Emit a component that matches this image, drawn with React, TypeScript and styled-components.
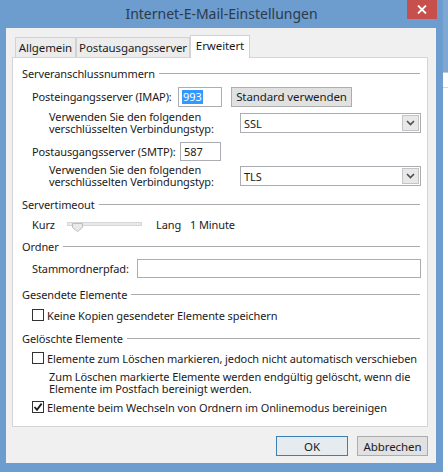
import React from "react";
import styled, { createGlobalStyle } from "styled-components";

const GlobalStyle = createGlobalStyle`
  html, body {
    margin: 0;
    padding: 0;
    background: #ffffff;
  }
  body {
    font-family: "Noto Sans", "Open Sans", sans-serif;
    font-size: 11px;
    letter-spacing: -0.1px;
    color: #1b1b1b;
  }
`;

const Screen = styled.div`
  display: flex;
  width: 448px;
  height: 472px;
  overflow: hidden;
`;

const Frame = styled.div`
  width: 443px;
  flex: none;
  display: flex;
  flex-direction: column;
  background: #6d9cce;
`;

const Backdrop = styled.div`
  flex: 1;
  display: flex;
  flex-direction: column;
  background: #ffffff;
`;

const BackdropHead = styled.div`
  height: 72px;
  background: #7ea7d3;
  border-bottom: 1px solid #c9c9c9;
`;

const BackdropRule = styled.div`
  margin-top: 14px;
  border-top: 1px solid #d6d6d6;
`;

const TitleBar = styled.div`
  height: 28px;
  flex: none;
  display: grid;
  grid-template-columns: 1fr auto 1fr;
  align-items: start;
`;

const Title = styled.div`
  grid-column: 2;
  margin-top: 5px;
  font-size: 14px;
  line-height: 18px;
  letter-spacing: 0;
  color: #2c3a4a;
`;

const CloseButton = styled.div`
  grid-column: 3;
  justify-self: end;
  margin-right: 6px;
  width: 30px;
  height: 19px;
  background: #c7504c;
  display: flex;
  align-items: center;
  justify-content: center;
`;

const Client = styled.div`
  flex: 1;
  margin: 0 7px 9px 6px;
  padding: 0 8px 0 6px;
  background: #f0f0f0;
  display: flex;
  flex-direction: column;
`;

const TabStrip = styled.div`
  display: flex;
  align-items: flex-end;
  height: 22px;
  margin-top: 7px;
  padding-left: 3px;
`;

const Tab = styled.div<{ $active?: boolean; $w: number }>`
  position: relative;
  box-sizing: border-box;
  width: ${(p) => p.$w}px;
  height: ${(p) => (p.$active ? 23 : 20)}px;
  margin-bottom: ${(p) => (p.$active ? -1 : 0)}px;
  padding-bottom: ${(p) => (p.$active ? 3 : 0)}px;
  border: 1px solid #d2d2d2;
  border-bottom: none;
  background: ${(p) => (p.$active ? "#ffffff" : "#ececec")};
  z-index: ${(p) => (p.$active ? 1 : 0)};
  display: flex;
  align-items: center;
  justify-content: center;
  font-size: 11.5px;
`;

const Panel = styled.div`
  box-sizing: border-box;
  height: 370px;
  flex: none;
  background: #ffffff;
  border: 1px solid #d5d5d5;
  padding: 0 6px 0 9px;
  display: flex;
  flex-direction: column;
`;

const Heading = styled.div<{ $top: number }>`
  display: flex;
  align-items: center;
  gap: 4px;
  height: 14px;
  margin-top: ${(p) => p.$top}px;
  padding-right: 1px;
  &::after {
    content: "";
    flex: 1;
    border-top: 1px solid #ababab;
  }
`;

const Row = styled.div<{ $top: number; $h: number; $indent?: number }>`
  display: flex;
  align-items: center;
  height: ${(p) => p.$h}px;
  margin-top: ${(p) => p.$top}px;
  padding-left: ${(p) => p.$indent ?? 10}px;
`;

const Label = styled.div<{ $w?: number; $gap?: number }>`
  flex: none;
  width: ${(p) => (p.$w ? `${p.$w}px` : "auto")};
  margin-left: ${(p) => p.$gap ?? 0}px;
  line-height: 13px;
`;

// one line of a wrapped label, kept to a fixed pitch
const Line = styled.div`
  height: 12px;
  line-height: 12px;
  white-space: nowrap;
`;

const TextBox = styled.div<{ $w?: number; $h: number }>`
  box-sizing: border-box;
  flex: ${(p) => (p.$w ? "none" : "1")};
  width: ${(p) => (p.$w ? `${p.$w}px` : "auto")};
  height: ${(p) => p.$h}px;
  border: 1px solid #abadb3;
  background: #ffffff;
  display: flex;
  align-items: center;
  padding-left: 3px;
`;

const Selected = styled.span`
  background: #3399ff;
  color: #ffffff;
  line-height: 14px;
  padding: 0 1px;
`;

const Button = styled.div<{ $w: number; $default?: boolean; $gap?: number }>`
  box-sizing: border-box;
  flex: none;
  width: ${(p) => p.$w}px;
  height: 20px;
  margin-left: ${(p) => p.$gap ?? 0}px;
  border: 1px solid ${(p) => (p.$default ? "#3c7fb1" : "#adadad")};
  background: ${(p) => (p.$default ? "#e6ebf0" : "#e1e1e1")};
  display: flex;
  align-items: center;
  justify-content: center;
  font-size: 11.5px;
`;

const Select = styled.div`
  box-sizing: border-box;
  flex: none;
  width: 181px;
  height: 20px;
  border: 1px solid #abadb3;
  background: #ffffff;
  display: flex;
  align-items: center;
  justify-content: space-between;
  padding: 0 1px 0 3px;
`;

const DropButton = styled.div`
  box-sizing: border-box;
  width: 17px;
  height: 16px;
  border: 1px solid #c4c4c4;
  background: #e8e8e8;
  display: flex;
  align-items: center;
  justify-content: center;
`;

const Track = styled.div`
  flex: none;
  width: 75px;
  height: 12px;
  display: flex;
  align-items: center;
`;

const TrackBar = styled.div`
  box-sizing: border-box;
  width: 100%;
  height: 4px;
  border: 1px solid #d6d6d6;
  background: #e7eaea;
  display: flex;
  align-items: center;
  padding-left: 4px;
`;

const Thumb = styled.svg`
  flex: none;
  margin-top: 6px;
`;

const CheckRow = styled(Row)`
  gap: 3px;
`;

const CheckBox = styled.div`
  box-sizing: border-box;
  flex: none;
  width: 12px;
  height: 12px;
  border: 1px solid #333333;
  background: #ffffff;
  display: flex;
  align-items: center;
  justify-content: center;
`;

const Note = styled.div<{ $top: number }>`
  margin-top: ${(p) => p.$top}px;
  padding-left: 27px;
`;

const Actions = styled.div`
  display: flex;
  justify-content: flex-end;
  gap: 9px;
  margin-top: 9px;
`;

const Chevron = () => (
  <svg width="9" height="6" viewBox="0 0 9 6">
    <polyline points="1,1 4.5,4.5 8,1" fill="none" stroke="#4d4d4d" strokeWidth="1.6" />
  </svg>
);

const Dropdown = ({ value }: { value: string }) => (
  <Select>
    <span>{value}</span>
    <DropButton>
      <Chevron />
    </DropButton>
  </Select>
);

const Check = ({ checked }: { checked?: boolean }) => (
  <CheckBox>
    {checked && (
      <svg width="10" height="10" viewBox="0 0 10 10">
        <polyline points="1.5,5 4,7.8 8.6,1.6" fill="none" stroke="#1b1b1b" strokeWidth="1.8" />
      </svg>
    )}
  </CheckBox>
);

const ConnectionRow = ({ top, h, value }: { top: number; h: number; value: string }) => (
  <Row $top={top} $h={h} $indent={27}>
    <Label $w={191}>
      <Line>Verwenden Sie den folgenden</Line>
      <Line>verschlüsselten Verbindungstyp:</Line>
    </Label>
    <Dropdown value={value} />
  </Row>
);

export default function App() {
  return (
    <>
      <GlobalStyle />
      <Screen>
        <Frame>
          <TitleBar>
            <Title>Internet-E-Mail-Einstellungen</Title>
            <CloseButton>
              <svg width="10" height="9" viewBox="0 0 10 9">
                <path d="M1 0.5 L9 8.5 M9 0.5 L1 8.5" stroke="#ffffff" strokeWidth="1.8" />
              </svg>
            </CloseButton>
          </TitleBar>
          <Client>
            <TabStrip>
              <Tab $w={61}>Allgemein</Tab>
              <Tab $w={114}>Postausgangsserver</Tab>
              <Tab $w={60} $active>
                Erweitert
              </Tab>
            </TabStrip>
            <Panel>
              <Heading $top={8}>Serveranschlussnummern</Heading>
              <Row $top={6} $h={21}>
                <Label $w={146}>Posteingangsserver (IMAP):</Label>
                <TextBox $w={44} $h={20}>
                  <Selected>993</Selected>
                </TextBox>
                <Button $w={121} $gap={9}>
                  Standard verwenden
                </Button>
              </Row>
              <ConnectionRow top={5} h={22} value="SSL" />
              <Row $top={7} $h={20}>
                <Label $w={148}>Postausgangsserver (SMTP):</Label>
                <TextBox $w={41} $h={19}>
                  587
                </TextBox>
              </Row>
              <ConnectionRow top={3} h={24} value="TLS" />

              <Heading $top={9}>Servertimeout</Heading>
              <Row $top={5} $h={16}>
                <Label $w={35}>Kurz</Label>
                <Track>
                  <TrackBar>
                    <Thumb width="11" height="9" viewBox="0 0 11 9">
                      <path d="M0.5 0.5 H10.5 V4.5 L5.5 8.5 L0.5 4.5 Z" fill="#e9e9e9" stroke="#bdbdbd" />
                    </Thumb>
                  </TrackBar>
                </Track>
                <Label $w={34} $gap={14}>
                  Lang
                </Label>
                <Label>1 Minute</Label>
              </Row>

              <Heading $top={7}>Ordner</Heading>
              <Row $top={5} $h={21}>
                <Label $w={105}>Stammordnerpfad:</Label>
                <TextBox $h={19} />
              </Row>

              <Heading $top={8}>Gesendete Elemente</Heading>
              <CheckRow $top={6} $h={16}>
                <Check />
                <Label>Keine Kopien gesendeter Elemente speichern</Label>
              </CheckRow>

              <Heading $top={8}>Gelöschte Elemente</Heading>
              <CheckRow $top={5} $h={16}>
                <Check />
                <Label>Elemente zum Löschen markieren, jedoch nicht automatisch verschieben</Label>
              </CheckRow>
              <Note $top={5}>
                <Line>Zum Löschen markierte Elemente werden endgültig gelöscht, wenn die</Line>
                <Line>Elemente im Postfach bereinigt werden.</Line>
              </Note>
              <CheckRow $top={4} $h={16}>
                <Check checked />
                <Label>Elemente beim Wechseln von Ordnern im Onlinemodus bereinigen</Label>
              </CheckRow>
            </Panel>
            <Actions>
              <Button $w={72} $default>
                OK
              </Button>
              <Button $w={71}>Abbrechen</Button>
            </Actions>
          </Client>
        </Frame>
        <Backdrop>
          <BackdropHead />
          <BackdropRule />
        </Backdrop>
      </Screen>
    </>
  );
}
